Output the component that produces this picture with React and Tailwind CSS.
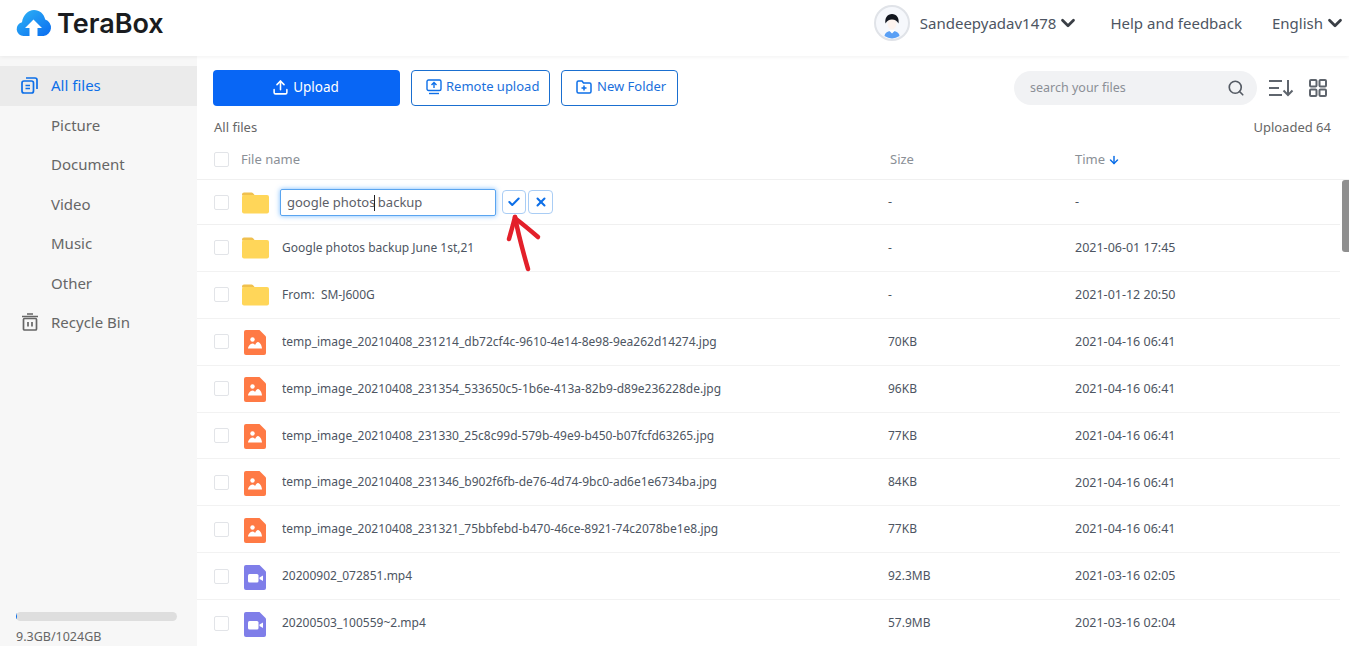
import { ChevronDown, Check, X, Search, ArrowDown, Upload } from 'lucide-react';

const sideItems = ['Picture', 'Document', 'Video', 'Music', 'Other'];

const files = [
  { type: 'folder', name: 'Google photos backup June 1st,21', size: '-', time: '2021-06-01 17:45' },
  { type: 'folder', name: 'From:\u00a0\u00a0SM-J600G', size: '-', time: '2021-01-12 20:50' },
  { type: 'image', name: 'temp_image_20210408_231214_db72cf4c-9610-4e14-8e98-9ea262d14274.jpg', size: '70KB', time: '2021-04-16 06:41' },
  { type: 'image', name: 'temp_image_20210408_231354_533650c5-1b6e-413a-82b9-d89e236228de.jpg', size: '96KB', time: '2021-04-16 06:41' },
  { type: 'image', name: 'temp_image_20210408_231330_25c8c99d-579b-49e9-b450-b07fcfd63265.jpg', size: '77KB', time: '2021-04-16 06:41' },
  { type: 'image', name: 'temp_image_20210408_231346_b902f6fb-de76-4d74-9bc0-ad6e1e6734ba.jpg', size: '84KB', time: '2021-04-16 06:41' },
  { type: 'image', name: 'temp_image_20210408_231321_75bbfebd-b470-46ce-8921-74c2078be1e8.jpg', size: '77KB', time: '2021-04-16 06:41' },
  { type: 'video', name: '20200902_072851.mp4', size: '92.3MB', time: '2021-03-16 02:05' },
  { type: 'video', name: '20200503_100559~2.mp4', size: '57.9MB', time: '2021-03-16 02:04' },
];

function Logo() {
  return (
    <svg width="36" height="28" viewBox="0 0 36 28">
      <defs>
        <linearGradient id="cloud" x1="0" y1="0" x2="1" y2="1">
          <stop offset="0" stopColor="#2fb5f5" />
          <stop offset="1" stopColor="#0a6cf0" />
        </linearGradient>
      </defs>
      <path
        d="M7.500 27a7 7 0 0 1-1.500-13.800C7.200 6 12 1 18 1c5.500 0 10 3.800 11.200 9.500A8.500 8.500 0 0 1 27.500 27Z"
        fill="url(#cloud)"
      />
      <path d="M17.500 10.500 26 19h-4.500v8h-8v-8H9Z" fill="#fff" />
    </svg>
  );
}

function FolderIcon() {
  return (
    <svg width="27" height="23" viewBox="0 0 27 23">
      <path d="M0 3.500A2 2 0 0 1 2 1.500h7.500a2 2 0 0 1 1.600.8L13 4.500H0Z" fill="#f0c04e" />
      <rect x="0" y="4" width="27" height="18.500" rx="2" fill="#ffd659" />
    </svg>
  );
}

function ImageIcon() {
  return (
    <svg width="22" height="25" viewBox="0 0 22 25" className="ml-[2px] mt-[2px]">
      <path d="M2 0h13.500L22 6.500V23a2 2 0 0 1-2 2H2a2 2 0 0 1-2-2V2a2 2 0 0 1 2-2Z" fill="#ff7a45" />
      <circle cx="8.500" cy="9.500" r="2.200" fill="#fff" />
      <path d="M4 18.500c0-2 2.500-5 4.500-5 1.500 0 2 1 2.500 1.500.8-1.500 1.800-3 3-3 2 0 4 4 4 6.500Z" fill="#fff" />
    </svg>
  );
}

function VideoIcon() {
  return (
    <svg width="22" height="25" viewBox="0 0 22 25" className="ml-[2px] mt-[2px]">
      <path d="M2 0h13.500L22 6.500V23a2 2 0 0 1-2 2H2a2 2 0 0 1-2-2V2a2 2 0 0 1 2-2Z" fill="#7f7ee9" />
      <rect x="4" y="9" width="10.500" height="8.500" rx="1.500" fill="#fff" />
      <path d="M15.500 12.500 19 10.500v5.500l-3.500-2Z" fill="#fff" />
    </svg>
  );
}

function FileIcon({ type }) {
  if (type === 'folder') return <FolderIcon />;
  if (type === 'image') return <ImageIcon />;
  return <VideoIcon />;
}

function Checkbox() {
  return <div className="w-[15px] h-[15px] shrink-0 rounded-[2px] border border-[#e2e4e8] bg-white" />;
}

function Avatar() {
  return (
    <svg width="36" height="36" viewBox="0 0 36 36">
      <circle cx="18" cy="18" r="17" fill="#f6f8fc" stroke="#e0e3e8" strokeWidth="2" />
      <path d="M10.500 31c.5-3.500 3-5 7.500-5s7 1.500 7.500 5a14 14 0 0 1-15 0Z" fill="#5aa0f5" />
      <path d="M14.500 25h7L18 28.500Z" fill="#fff" />
      <ellipse cx="18" cy="18.500" rx="4.500" ry="6" fill="#fdf3ee" />
      <path d="M11.500 18.500C10.500 13 13.500 9 18 9s7.500 4 6.500 9.500c-1.500-2.500-3.500-4-6.500-4s-5 1.500-6.500 4Z" fill="#12161f" />
    </svg>
  );
}

export default function App() {
  return (
    <div
      className="relative h-[646px] overflow-hidden bg-white text-[#4d5562]"
      style={{ fontFamily: '"Noto Sans", "Open Sans", sans-serif' }}
    >
      {/* header */}
      <header className="relative z-10 flex h-[56px] items-center justify-between bg-white pb-[10px] pl-[16px] pr-[3px] shadow-[0_1px_4px_rgba(0,0,0,0.06)]">
        <div className="flex items-center gap-[5px]">
          <Logo />
          <span className="text-[27px] font-semibold leading-none text-[#1a1c20]" style={{ fontFamily: 'Inter, sans-serif' }}>
            TeraBox
          </span>
        </div>
        <div className="flex items-center text-[15px]">
          <Avatar />
          <span className="ml-[10px]">Sandeepyadav1478</span>
          <ChevronDown size={22} strokeWidth={3} className="ml-[1px] text-[#3a3f46]" />
          <span className="ml-[31px]">Help and feedback</span>
          <span className="ml-[30px]">English</span>
          <ChevronDown size={22} strokeWidth={3} className="ml-[1px] text-[#3a3f46]" />
        </div>
      </header>

      <div className="flex h-[590px]">
        {/* sidebar */}
        <aside className="flex w-[197px] shrink-0 flex-col bg-[#f7f7f7] pt-[10px]">
          <div className="flex h-[40px] items-center bg-[#ebebeb] pb-[2px] pl-[21px] text-[15px] text-[#0d6fe8]">
            <svg width="17" height="17" viewBox="0 0 17 17" fill="none" stroke="#0d6fe8" strokeWidth="1.700">
              <rect x="1" y="4" width="11.500" height="12" rx="2" />
              <path d="M5 1h9a2 2 0 0 1 2 2v9" />
              <path d="M4.500 8.500h4.500M4.500 11.500h4.500" />
            </svg>
            <span className="ml-[13px]">All files</span>
          </div>
          {sideItems.map((item) => (
            <div key={item} className="flex h-[39.500px] items-center pb-[2px] pl-[51px] text-[15px] text-[#666]">
              {item}
            </div>
          ))}
          <div className="flex h-[39.500px] items-center pb-[2px] pl-[22px] text-[15px] text-[#666]">
            <svg width="16" height="18" viewBox="0 0 16 18" fill="none" stroke="#666" strokeWidth="1.700">
              <path d="M0 3.500h16M5 1h6" />
              <rect x="1.500" y="5.500" width="13" height="11.500" rx="1" />
              <path d="M6 9v4.500M10 9v4.500" />
            </svg>
            <span className="ml-[13px]">Recycle Bin</span>
          </div>
          <div className="mt-auto pl-[16px] pr-[20px]">
            <div className="h-[9px] overflow-hidden rounded-full bg-[#dedede]">
              <div className="h-full bg-[#0d6fe8]" style={{ width: '1px' }} />
            </div>
            <div className="mt-[6px] h-[19px] text-[12.500px] leading-[19px] text-[#666]">9.3GB/1024GB</div>
          </div>
        </aside>

        {/* main */}
        <main className="min-w-0 flex-1">
          <div className="mt-[14px] flex h-[36px] items-center pl-[16px] pr-[22px]">
            <button className="flex h-[36px] w-[187px] items-center justify-center gap-[4px] rounded-[4px] bg-[#0866f5] pb-[2px] pr-[2px] text-[13.500px] text-white">
              <Upload size={17} strokeWidth={2.200} />
              Upload
            </button>
            <button className="ml-[11px] flex h-[36px] w-[139px] items-center gap-[4px] rounded-[4px] border border-[#1a6fd0] pb-[2px] pl-[14px] text-[13px] text-[#1a70dc]">
              <svg width="16" height="16" viewBox="0 0 16 16" fill="none" stroke="#0d6fe8" strokeWidth="1.400">
                <rect x="1" y="1" width="14" height="10.500" rx="1.500" />
                <path d="M8 9V3.800M5.500 6 8 3.500 10.500 6" />
                <path d="M3 14.500h10" />
              </svg>
              Remote upload
            </button>
            <button className="ml-[11px] flex h-[36px] w-[117px] items-center gap-[5px] rounded-[4px] border border-[#1a6fd0] pb-[2px] pl-[14px] text-[13px] text-[#1a70dc]">
              <svg width="16" height="14" viewBox="0 0 16 14" fill="none" stroke="#0d6fe8" strokeWidth="1.500">
                <path d="M1 2.500a1.500 1.500 0 0 1 1.500-1.500h3.500l1.500 2h6a1.500 1.500 0 0 1 1.500 1.500v7a1.500 1.500 0 0 1-1.500 1.500h-11A1.500 1.500 0 0 1 1 11.500Z" />
                <path d="M8 5.500v5M5.500 8h5" />
              </svg>
              New Folder
            </button>
            <div className="ml-auto flex h-[34px] w-[243px] items-center justify-between rounded-full bg-[#f1f2f4] pl-[16px] pr-[12px] text-[12.500px] text-[#8b8f96]">
              search your files
              <Search size={18} strokeWidth={2.200} className="text-[#555b64]" />
            </div>
            <svg width="26" height="18" viewBox="0 0 26 18" fill="none" stroke="#5f656d" strokeWidth="2" className="ml-[11px]">
              <path d="M1 2h13M1 9h10M1 16h13M20 1v15M15.500 11.500 20 16l4.500-4.500" />
            </svg>
            <svg width="18" height="18" viewBox="0 0 18 18" fill="none" stroke="#5f656d" strokeWidth="2" className="ml-[15px]">
              <rect x="1" y="1" width="6.500" height="6.500" rx="1" />
              <rect x="10.500" y="1" width="6.500" height="6.500" rx="1" />
              <rect x="1" y="10.500" width="6.500" height="6.500" rx="1" />
              <rect x="10.500" y="10.500" width="6.500" height="6.500" rx="1" />
            </svg>
          </div>

          <div className="mt-[12px] flex h-[20px] items-center justify-between pl-[17px] pr-[18px] text-[13px] text-[#666]">
            <span>All files</span>
            <span>Uploaded 64</span>
          </div>

          {/* table head */}
          <div className="mt-[1px] flex h-[41px] items-center border-b border-[#f0f0f0] pl-[17px] pt-[1px] text-[13px] text-[#8a8f96]">
            <Checkbox />
            <span className="ml-[12px] w-[649px]">File name</span>
            <span className="w-[185px]">Size</span>
            <span>Time</span>
            <ArrowDown size={12} strokeWidth={3} className="ml-[3px] text-[#0d6fe8]" />
          </div>

          {/* rename row */}
          <div className="mr-[9px] flex h-[45px] items-center border-b border-[#f0f0f0] pl-[17px] text-[12.500px]">
            <Checkbox />
            <div className="ml-[13px] w-[29px] shrink-0">
              <FolderIcon />
            </div>
            <div className="ml-[9px] flex h-[27px] w-[216px] items-center rounded-[2px] border border-[#5aa5f0] pl-[6px] pt-[1px] text-[13px] text-[#5c6068] shadow-[0_0_5px_rgba(64,158,255,0.7)]">
              google photos
              <span className="mx-[-1px] inline-block h-[16px] w-px bg-[#222]" />
              <span>&nbsp;backup</span>
            </div>
            <button className="ml-[6px] flex h-[24px] w-[24px] items-center justify-center rounded-[4px] border border-[#a9cdf5] text-[#0d6fe8]">
              <Check size={14} strokeWidth={3.500} />
            </button>
            <button className="ml-[2px] flex h-[24px] w-[25px] items-center justify-center rounded-[4px] border border-[#a9cdf5] text-[#0d6fe8]">
              <X size={14} strokeWidth={3.500} />
            </button>
            <span className="ml-[335px] w-[187px]">-</span>
            <span>-</span>
          </div>

          {/* file rows */}
          {files.map((file) => (
            <div key={file.name} className="mr-[9px] flex h-[46.900px] items-center border-b border-[#f2f2f2] pl-[17px]">
              <Checkbox />
              <div className="ml-[13px] w-[29px] shrink-0">
                <FileIcon type={file.type} />
              </div>
              <span className="ml-[11px] w-[606px] shrink-0 truncate text-[12px]">{file.name}</span>
              <span className="w-[187px] shrink-0 text-[12px]">{file.size}</span>
              <span className="pt-[1px] text-[12.500px]">{file.time}</span>
            </div>
          ))}
        </main>
      </div>

      {/* scrollbar thumb */}
      <div className="absolute right-0 top-[180px] h-[72px] w-[7px] rounded-l-[3px] bg-[#8f8f8f]" />

      {/* red hand-drawn arrow over the row */}
      <svg width="50" height="70" viewBox="0 0 50 70" className="absolute left-[498px] top-[208px]" fill="none" stroke="#e3202a" strokeWidth="4.500" strokeLinecap="round" strokeLinejoin="round">
        <path d="M30 61C26 47 21 30 17 9" />
        <path d="M11 31C13 24 15 17 17 9" />
        <path d="M40 29C33 23 26 17 18 11" />
      </svg>
    </div>
  );
}
